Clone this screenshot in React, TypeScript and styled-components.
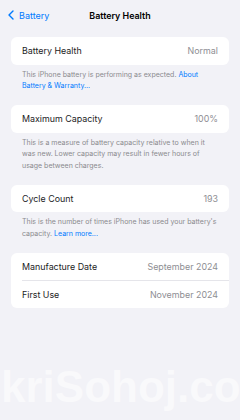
import { FC } from 'react';
import styled, { createGlobalStyle } from 'styled-components';

const GlobalStyle = createGlobalStyle`
  html, body {
    margin: 0;
    padding: 0;
    background: #f2f2f7;
  }
  body {
    font-family: Inter, "Liberation Sans", sans-serif;
    -webkit-font-smoothing: antialiased;
  }
`;

const Screen = styled.div`
  position: relative;
  width: 240px;
  height: 420px;
  overflow: hidden;
  background: #f2f2f7;
`;

const NavBar = styled.header`
  display: grid;
  grid-template-columns: 1fr auto 1fr;
  align-items: center;
  height: 30px;
  padding: 0 8px;
`;

const BackButton = styled.div`
  display: flex;
  align-items: center;
  gap: 5px;
  color: #007aff;
  font-size: 9px;
`;

const NavTitle = styled.h1`
  margin: 0;
  font-size: 8.9px;
  font-weight: 600;
  color: #000;
`;

const Content = styled.main`
  padding: 7px 11px 0;
`;

const Group = styled.section`
  margin-bottom: 13.5px;
`;

const Card = styled.div`
  background: #fff;
  border-radius: 6px;
  overflow: hidden;
`;

const Row = styled.div<{ $divider?: boolean }>`
  position: relative;
  display: flex;
  justify-content: space-between;
  align-items: center;
  height: 27.5px;
  padding: 0 11px;
  font-size: 8.9px;
  color: #1c1c1e;
  ${({ $divider }) =>
    $divider &&
    `
    &::after {
      content: '';
      position: absolute;
      left: 11px;
      right: 0;
      bottom: 0;
      height: 1px;
      background: #e5e5ea;
    }
  `}
`;

const Value = styled.span`
  color: #8e8e93;
`;

const Footer = styled.p`
  margin: 4px 11px 0;
  font-size: 7px;
  line-height: 11.6px;
  color: #8a8a8e;
`;

const Link = styled.span`
  color: #007aff;
`;

const Watermark = styled.div`
  position: absolute;
  left: 1px;
  top: 362px;
  font-family: "Liberation Sans", Arial, sans-serif;
  font-weight: 700;
  font-size: 44px;
  color: #f9f9fb;
  white-space: nowrap;
  pointer-events: none;
`;

const Chevron: FC = () => (
  <svg width="6" height="10" viewBox="0 0 6 10" fill="none">
    <path d="M5 1L1 5l4 4" stroke="#007aff" strokeWidth="1.4" strokeLinecap="round" strokeLinejoin="round" />
  </svg>
);

export default function App() {
  return (
    <Screen>
      <GlobalStyle />
      <NavBar>
        <BackButton>
          <Chevron />
          Battery
        </BackButton>
        <NavTitle>Battery Health</NavTitle>
        <span />
      </NavBar>
      <Content>
        <Group>
          <Card>
            <Row>
              Battery Health<Value>Normal</Value>
            </Row>
          </Card>
          <Footer>
            This iPhone battery is performing as expected. <Link>About Battery &amp; Warranty...</Link>
          </Footer>
        </Group>
        <Group>
          <Card>
            <Row>
              Maximum Capacity<Value>100%</Value>
            </Row>
          </Card>
          <Footer>
            This is a measure of battery capacity relative to when it was new. Lower capacity may result in
            fewer hours of usage between charges.
          </Footer>
        </Group>
        <Group>
          <Card>
            <Row>
              Cycle Count<Value>193</Value>
            </Row>
          </Card>
          <Footer>
            This is the number of times iPhone has used your battery's capacity. <Link>Learn more...</Link>
          </Footer>
        </Group>
        <Group>
          <Card>
            <Row $divider>
              Manufacture Date<Value>September 2024</Value>
            </Row>
            <Row>
              First Use<Value>November 2024</Value>
            </Row>
          </Card>
        </Group>
      </Content>
      <Watermark>kriSohoj.co</Watermark>
    </Screen>
  );
}
